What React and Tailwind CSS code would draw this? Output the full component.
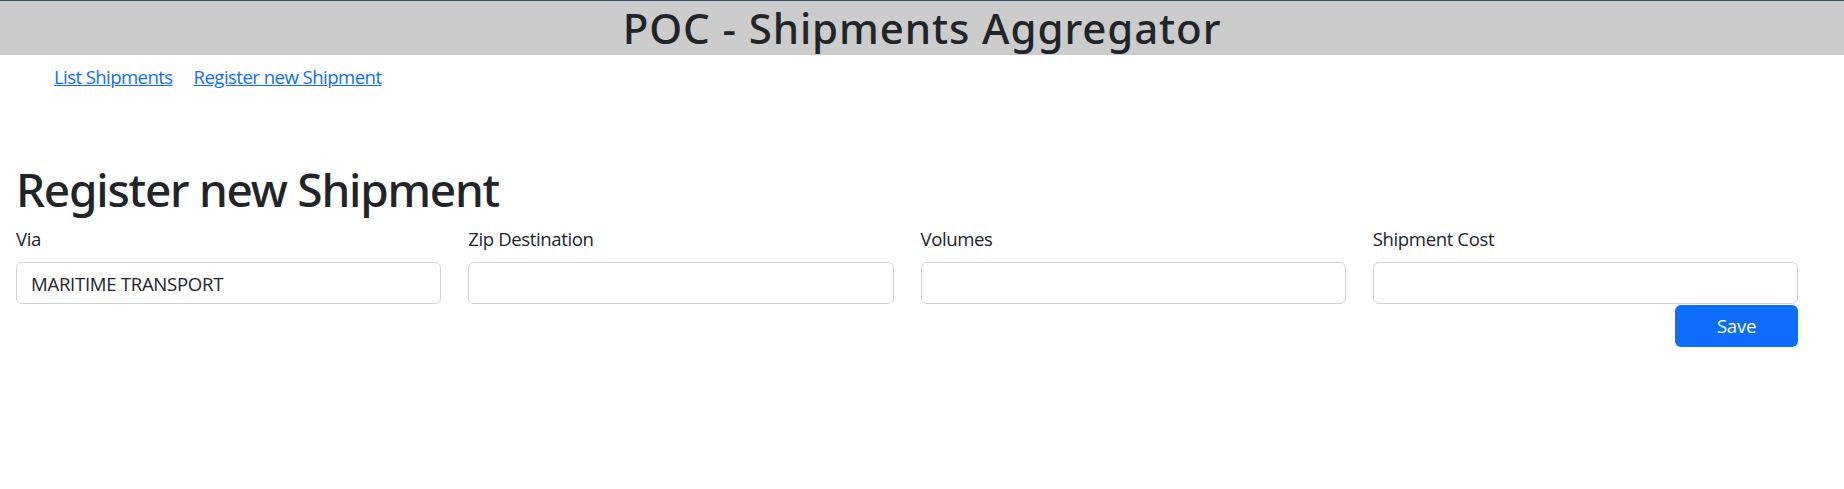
const fields = [
  { label: 'Via', value: 'MARITIME TRANSPORT' },
  { label: 'Zip Destination', value: '' },
  { label: 'Volumes', value: '' },
  { label: 'Shipment Cost', value: '' },
];

export default function App() {
  return (
    <div className="min-h-[489px] bg-white text-[#212529] font-['Open_Sans',sans-serif]">
      <header className="h-[55px] border-t border-[#34557a] bg-[#cccccc] flex items-center justify-center">
        <h1 className="font-['Noto_Sans',sans-serif] text-[42px] leading-none font-medium tracking-[0.9px]">POC - Shipments Aggregator</h1>
      </header>

      <nav className="flex gap-[21px] pl-[54px] pt-[8px]">
        <a href="#" className="text-[18.6px] leading-[28px] tracking-[-0.6px] text-[#0d6efd] underline">List Shipments</a>
        <a href="#" className="text-[18.6px] leading-[28px] tracking-[-0.55px] text-[#0d6efd] underline">Register new Shipment</a>
      </nav>

      <main className="pl-[16px] pr-[46px] pt-[71px]">
        <h2 className="font-['Noto_Sans',sans-serif] text-[46px] leading-[55px] font-medium tracking-[-1.25px]">Register new Shipment</h2>
        <div className="grid grid-cols-4 gap-x-[27px] mt-[8px]">
          {fields.map((f) => (
            <div key={f.label}>
              <label className="block text-[18.6px] leading-[28px] tracking-[-0.4px] mb-[9px]">{f.label}</label>
              <input
                type="text"
                defaultValue={f.value}
                className="block w-full h-[42px] rounded-[6px] border border-[#ced4da] px-[14px] text-[18.6px] tracking-[-0.3px] text-[#212529] outline-none"
              />
            </div>
          ))}
        </div>
        <div className="flex justify-end mt-px">
          <button className="w-[123px] h-[42px] rounded-[6px] bg-[#0d6efd] text-white text-[18.6px] tracking-[-0.3px]">Save</button>
        </div>
      </main>
    </div>
  );
}
